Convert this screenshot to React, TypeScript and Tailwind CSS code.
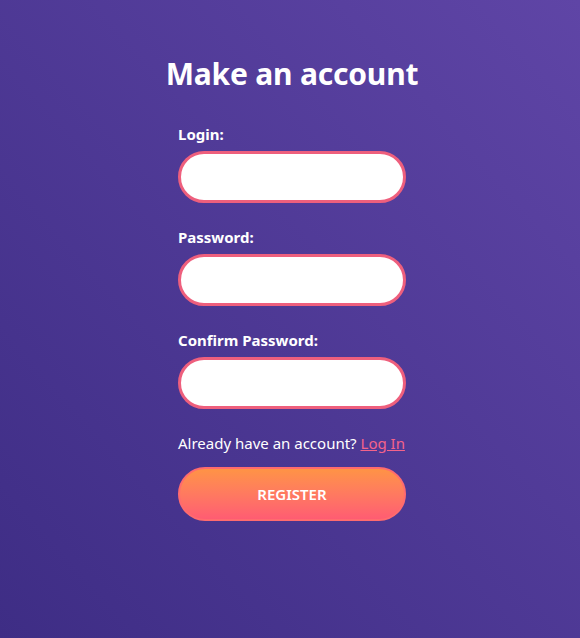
export default function App() {
  return (
    <div className="min-h-[638px] w-full bg-gradient-to-tr from-[#3e2d85] to-[#5f45a6] font-['Noto_Sans',sans-serif] text-white">
      <div className="flex flex-col items-center pl-1 pt-[51px]">
        <h1 className="text-[30px] font-bold leading-[46px] tracking-[-0.2px]">Make an account</h1>
        <form className="mt-[27px] flex w-[228px] flex-col" onSubmit={(e) => e.preventDefault()}>
          <Field label="Login:" />
          <Field label="Password:" type="password" />
          <Field label="Confirm Password:" type="password" />
          <p className="text-[15px] leading-[20px]">
            Already have an account?{" "}
            <a href="#" className="text-[#f4638a] underline">
              Log In
            </a>
          </p>
          <button
            type="submit"
            className="mt-[14px] h-[54px] w-full rounded-full border-2 border-[#ff6b6e] bg-gradient-to-b from-[#ff9345] to-[#ff5c72] text-[15px] font-semibold text-white"
          >
            REGISTER
          </button>
        </form>
      </div>
    </div>
  );
}

function Field({ label, type = "text" }: { label: string; type?: string }) {
  return (
    <label className="mb-[24px] flex flex-col">
      <span className="text-[15px] font-bold leading-[20px]">{label}</span>
      <input
        type={type}
        className="mt-[7px] h-[52px] w-full rounded-full border-[3px] border-[#ee5f7d] bg-white px-4 text-black outline-none"
      />
    </label>
  );
}
